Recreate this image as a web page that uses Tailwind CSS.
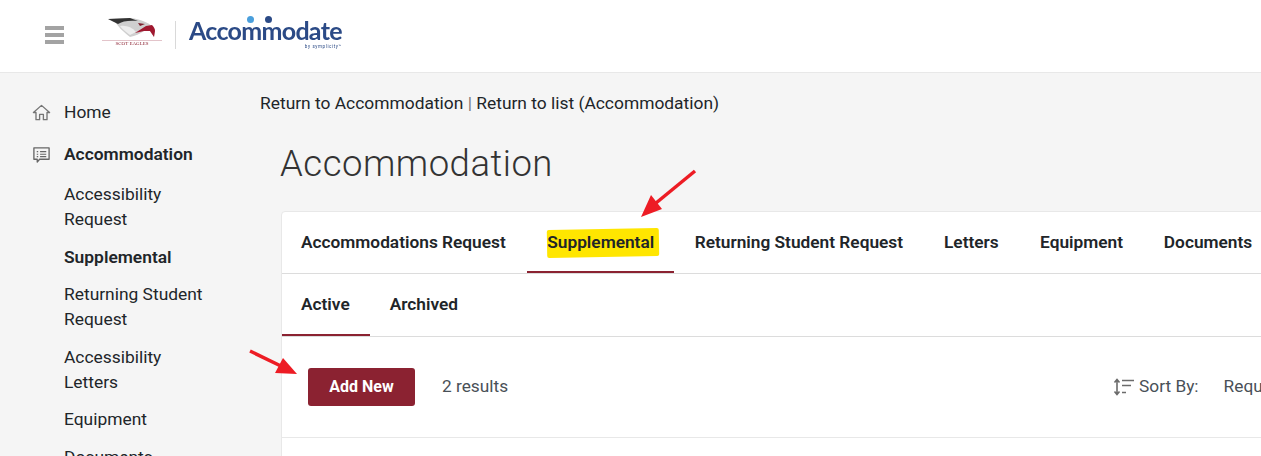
<!DOCTYPE html>
<html lang="en">
<head>
<meta charset="utf-8">
<title>Accommodation</title>
<script src="https://cdn.jsdelivr.net/npm/@tailwindcss/browser@4"></script>
</head>
<body class="m-0 h-[456px] w-[1261px] overflow-hidden bg-[#f5f5f5] font-['Roboto',sans-serif] text-[#212529]">
<div class="relative h-[456px] w-[1261px] overflow-hidden">
  <header class="flex h-[73px] items-center border-b border-[#e8e8e8] bg-white pl-[45px]">
    <div class="mb-[3px] flex w-[19px] flex-col gap-[3px]">
      <span class="h-[4px] bg-[#a3a3a3]"></span>
      <span class="h-[4px] bg-[#a3a3a3]"></span>
      <span class="h-[4px] bg-[#a3a3a3]"></span>
    </div>
    <div class="mb-[8px] ml-[37px] flex w-[62px] flex-col items-center blur-[0.3px]">
      <svg viewBox="0 0 48 20" class="h-[20px] w-[48px]">
        <path d="M0 1 L22 0 C34 1 44 6 47 12 L46 19 L42 13 L36 13 C32 16 27 18 22 19 C15 14 10 8 7 4 Z" fill="#cfcfcf"/>
        <path d="M0 1 L22 0 L30 3 C22 2 14 3 10 6 Z" fill="#333"/>
        <path d="M12 8 C18 7 24 9 28 14 L22 17 C18 14 14 11 12 8 Z" fill="#eee"/>
        <path d="M27 15 L38 8 L44 7 C46 9 47 11 47 13 L46 19 L42 13 L36 13 Z" fill="#a0182f"/>
        <path d="M30 5 L37 6 L32 8 Z" fill="#7d1f2c"/>
      </svg>
      <div class="mt-[2px] h-px w-[60px] bg-[#e3c4ca]"></div>
      <div class="font-['Liberation_Serif',serif] text-[5px] leading-[5px] text-[#8b2030]">SCOT EAGLES</div>
    </div>
    <div class="mb-[2px] ml-[12px] h-[28px] w-px bg-[#d9d9d9]"></div>
    <div class="relative mb-[6px] ml-[13px] w-[153px] blur-[0.3px]">
      <div class="font-['Lato',sans-serif] text-[25px] leading-[26px] font-bold tracking-[-0.7px] whitespace-nowrap text-[#2b4a86]">Accommodate</div>
      <span class="absolute top-[-1px] left-[58px] h-[7px] w-[7px] rounded-full bg-[#4a9fdc]"></span>
      <span class="absolute top-[-1px] left-[76px] h-[7px] w-[7px] rounded-full bg-[#2b4a86]"></span>
      <div class="mt-[1px] text-right text-[4.5px] leading-[5px] tracking-[0.6px] text-[#2b4a86]">by symplicity™</div>
    </div>
  </header>

  <div class="flex">
    <aside class="w-[281px] shrink-0 pt-[27px] pl-[32px] text-[17.4px] leading-[25px] text-[#212529]">
      <div class="flex items-center">
        <svg viewBox="0 0 20 20" class="h-[19px] w-[19px]" fill="none" stroke="#757575" stroke-width="1.4" stroke-linejoin="round"><path d="M1.5 10 L10 2.5 L18.5 10 H15.8 V17.5 H12 V12 H8 V17.5 H4.2 V10 Z"/></svg>
        <span class="ml-[13px]">Home</span>
      </div>
      <div class="mt-[17px] flex items-center">
        <svg viewBox="0 0 20 20" class="h-[19px] w-[19px]" fill="none" stroke="#666" stroke-width="1.4" stroke-linejoin="round"><path d="M2 3 H18 V15 H8 L5.5 18 V15 H2 Z"/><path d="M5 7 H6.5 M8.5 7 H15 M5 9.7 H6.5 M8.5 9.7 H15 M5 12.3 H6.5 M8.5 12.3 H15" stroke-width="1.2"/></svg>
        <span class="ml-[13px] font-semibold">Accommodation</span>
      </div>
      <nav class="mt-[15px] flex w-[177px] flex-col gap-[12.5px] pl-[32px]">
        <a class="block">Accessibility Request</a>
        <a class="block font-semibold">Supplemental</a>
        <a class="block">Returning Student Request</a>
        <a class="block">Accessibility Letters</a>
        <a class="block">Equipment</a>
        <a class="block">Documents</a>
      </nav>
    </aside>

    <main class="min-w-0 flex-1">
      <div class="-ml-[21px] pt-[18px] text-[17.4px] leading-[25px] whitespace-nowrap">
        Return to Accommodation <span class="text-[#777]">|</span> Return to list (Accommodation)
      </div>
      <h1 class="mt-[26px] -ml-px text-[36.5px] leading-[44px] font-light tracking-[0.5px] text-[#333]">Accommodation</h1>
      <section class="mt-[25px] w-[1000px] rounded-tl-[4px] border border-[#e8e8e8] bg-white">
        <div class="flex h-[62px] border-b border-[#dcdcdc] text-[17.3px] font-semibold text-[#212529]">
          <a class="flex items-center pr-[21.5px] pl-[19px] whitespace-nowrap">Accommodations Request</a>
          <a class="flex items-center border-b-2 border-[#8b2231] px-[20px] pt-[2px] whitespace-nowrap"><span class="relative"><span class="absolute top-[-1px] right-[-5px] bottom-[-1px] left-0 -rotate-1 rounded-[2px] bg-[#ffe600]"></span><span class="relative">Supplemental</span></span></a>
          <a class="flex items-center pr-[20.5px] pl-[20.5px] whitespace-nowrap">Returning Student Request</a>
          <a class="flex items-center pr-[21px] pl-[20.5px] whitespace-nowrap">Letters</a>
          <a class="flex items-center pr-[20.4px] pl-[20.4px] whitespace-nowrap">Equipment</a>
          <a class="flex items-center px-[20.4px] whitespace-nowrap">Documents</a>
        </div>
        <div class="flex h-[63px] border-b border-[#dcdcdc] text-[17.3px] font-semibold">
          <a class="flex items-center border-b-2 border-[#8b2231] pt-[2px] pr-[20px] pl-[19px]">Active</a>
          <a class="flex items-center px-[20px]">Archived</a>
        </div>
        <div class="flex h-[101px] items-center border-b border-[#e8e8e8] pl-[26px]">
          <button class="h-[38px] w-[107px] shrink-0 rounded-[3px] bg-[#8b2231] text-[16px] font-bold text-white">Add New</button>
          <span class="ml-[27px] shrink-0 text-[17.3px] whitespace-nowrap text-[#495057]">2 results</span>
          <svg viewBox="0 0 22 18" class="ml-[605px] h-[18px] w-[22px] shrink-0" fill="none" stroke="#6b6b6b" stroke-width="1.6"><path d="M4 2 V16 M1.5 4.5 L4 1.5 L6.5 4.5 M1.5 13.5 L4 16.5 L6.5 13.5"/><path d="M9 2.5 H21 M9 7.5 H18 M9 14.5 H13"/></svg>
          <span class="ml-[4px] shrink-0 text-[17.3px] whitespace-nowrap text-[#495057]">Sort By:</span>
          <span class="ml-[25px] shrink-0 text-[17.3px] whitespace-nowrap text-[#495057]">Requested Date</span>
        </div>
        <div class="h-[60px]"></div>
      </section>
    </main>
  </div>

  <svg class="pointer-events-none absolute top-0 left-0 h-[456px] w-[1261px]" viewBox="0 0 1261 456" fill="#ed1c24">
    <path d="M695 171 L656 203" stroke="#ed1c24" stroke-width="3.5" fill="none"/>
    <path d="M641 217 L651 195 L662 209 Z"/>
    <path d="M250 351 L285 368" stroke="#ed1c24" stroke-width="3.5" fill="none"/>
    <path d="M297 374 L275 373 L283 358 Z"/>
  </svg>
</div>
</body>
</html>
